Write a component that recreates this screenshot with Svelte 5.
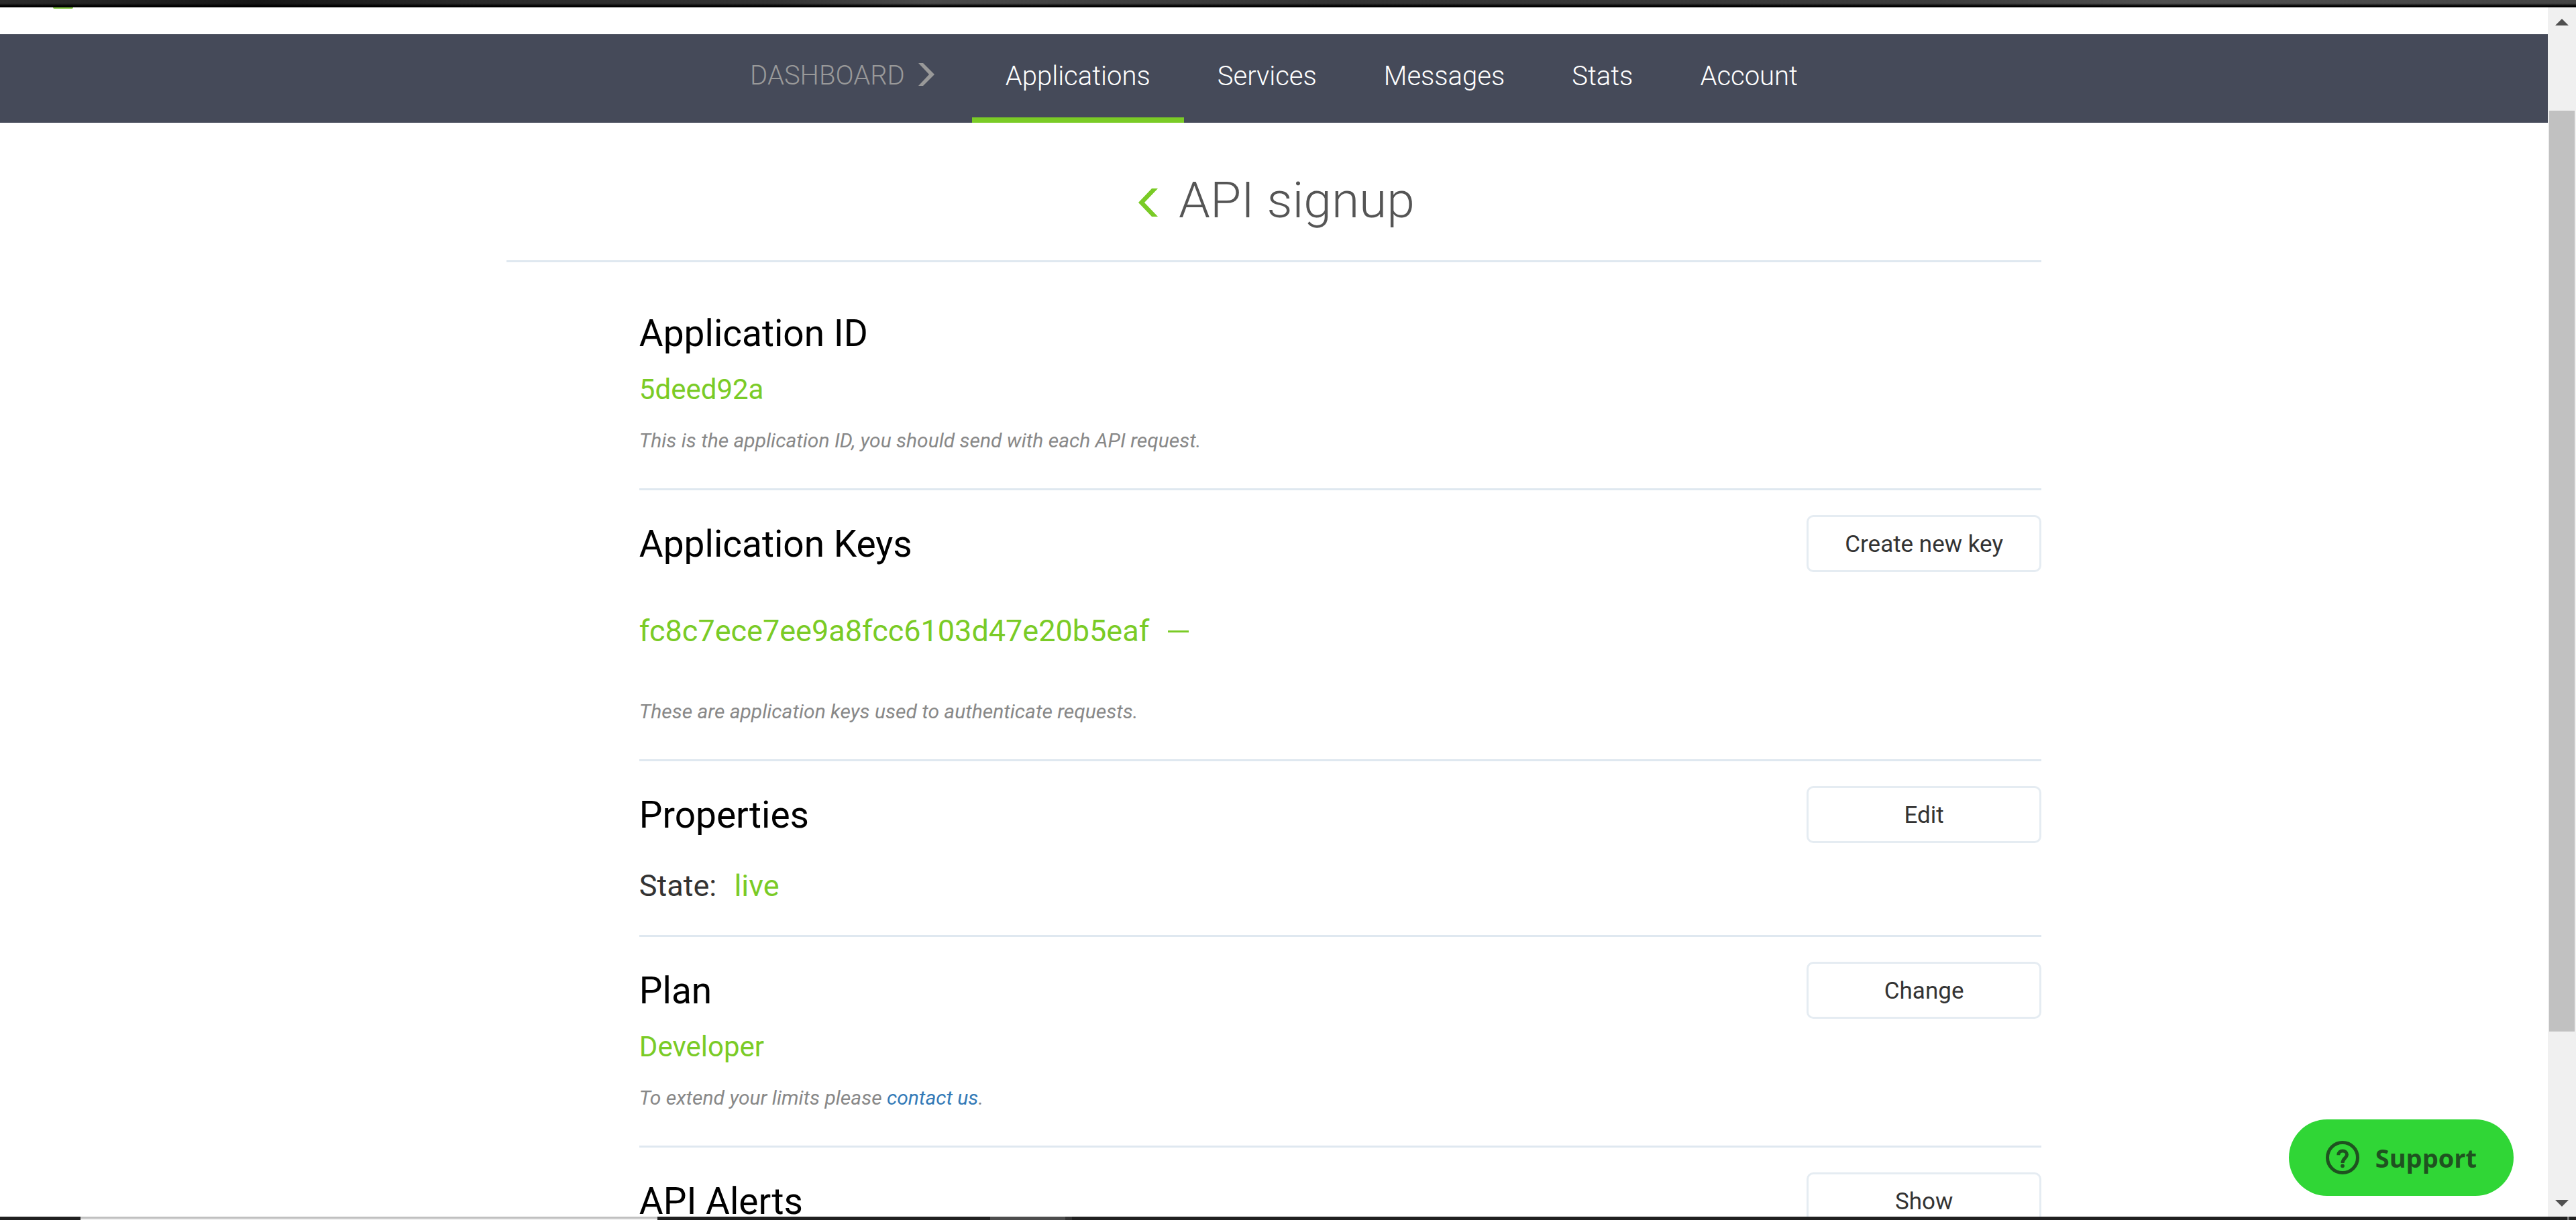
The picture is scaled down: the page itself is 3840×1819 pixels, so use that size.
<script lang="ts">
  const tabs = ['Applications', 'Services', 'Messages', 'Stats', 'Account'];
  let active = $state('Applications');
</script>

<div class="screen">
  <div class="edge-top"></div>
  <div class="viewport">
    <div class="page">
      <div class="brand"><span class="brand-tip"></span></div>
      <nav class="nav" aria-label="Main">
        <a class="crumb" href="#dashboard">
          DASHBOARD
          <svg class="crumb-arrow" viewBox="0 0 24 34" aria-hidden="true">
            <path d="M0 0H7L24 17L7 34H0L16 17Z" fill="#999" />
          </svg>
        </a>
        {#each tabs as tab}
          <a
            class="tab"
            class:active={tab === active}
            href="#{tab.toLowerCase()}"
            onclick={() => (active = tab)}>{tab}</a>
        {/each}
      </nav>

      <main class="main">
        <header class="title">
          <a class="back" href="#applications" aria-label="Back">
            <svg viewBox="0 0 29 42" aria-hidden="true">
              <path d="M20 0H29L9 21L29 42H20L0 21Z" fill="#7acb26" />
            </svg>
          </a>
          <h1>API signup</h1>
        </header>

        <div class="sections">
          <section>
            <div class="head"><h2>Application ID</h2></div>
            <p class="value">5deed92a</p>
            <p class="note">This is the application ID, you should send with each API request.</p>
          </section>

          <section>
            <div class="head">
              <h2>Application Keys</h2>
              <button class="action" type="button">Create new key</button>
            </div>
            <div class="key">
              <span>fc8c7ece7ee9a8fcc6103d47e20b5eaf</span>
              <button class="remove" type="button" aria-label="Delete key"></button>
            </div>
            <p class="note">These are application keys used to authenticate requests.</p>
          </section>

          <section class="short">
            <div class="head">
              <h2>Properties</h2>
              <button class="action" type="button">Edit</button>
            </div>
            <p class="state">State: <span class="live">live</span></p>
          </section>

          <section>
            <div class="head">
              <h2>Plan</h2>
              <button class="action" type="button">Change</button>
            </div>
            <p class="value">Developer</p>
            <p class="note">To extend your limits please <a href="#contact">contact us</a>.</p>
          </section>

          <section>
            <div class="head">
              <h2>API Alerts</h2>
              <button class="action" type="button">Show</button>
            </div>
          </section>
        </div>
      </main>
    </div>

    <div class="scrollbar" aria-hidden="true">
      <svg class="arrow" viewBox="0 0 20 10"><path d="M10 0L20 10H0Z" fill="#505050" /></svg>
      <div class="track">
        <div class="thumb"></div>
      </div>
      <svg class="arrow" viewBox="0 0 20 10"><path d="M0 0H20L10 10Z" fill="#505050" /></svg>
    </div>

    <button class="support" type="button">
      <svg viewBox="0 0 50 50" fill="none" aria-hidden="true">
        <circle cx="25" cy="25" r="22.5" stroke="#1f5220" stroke-width="5" />
        <path
          d="M18.8 21.2C18.8 17.4 21.6 15 25.2 15C28.8 15 31.5 17.4 31.5 20.6C31.5 25.6 25 26 25 33"
          stroke="#1f5220"
          stroke-width="5" />
        <circle cx="25" cy="37.3" r="2.9" fill="#1f5220" />
      </svg>
      Support
    </button>
  </div>
  <div class="edge-bottom">
    <span class="task-light"></span>
    <span class="task-gray"></span>
    <span class="task-dim"></span>
    <span class="task-end"></span>
  </div>
</div>

<style>
  :global(body) {
    overflow: hidden;
    background: #fff;
    font-family: Roboto, 'Liberation Sans', sans-serif;
  }

  .screen {
    display: flex;
    flex-direction: column;
    height: 100vh;
  }

  .edge-top {
    flex: none;
    height: 11px;
    background:
      linear-gradient(#0000 0, #0000 5px, #000 9px),
      linear-gradient(90deg, #2c2c2c, #161616 10%, #2a2a2a 18%, #333 30%, #4a4a4a 36%, #333 52%, #3c3c3c 75%, #505050 84%, #444);
  }

  .viewport {
    position: relative;
    display: flex;
    flex: 1;
    min-height: 0;
  }

  .page {
    flex: 1;
    min-width: 0;
    overflow: hidden;
  }

  .brand {
    height: 40px;
    padding-left: 79px;
  }

  .brand-tip {
    display: block;
    width: 30px;
    height: 2px;
    border-radius: 0 0 15px 15px;
    background: #7fc241;
  }

  .nav {
    display: flex;
    justify-content: center;
    height: 132px;
    background: #454a59;
    font-size: 40px;
    line-height: 126px;
    font-weight: 300;
  }

  .crumb {
    display: flex;
    align-items: center;
    gap: 20px;
    box-sizing: border-box;
    height: 120px;
    padding: 4px 56px 0 50px;
    color: #999;
    line-height: 50px;
    text-decoration: none;
  }

  .crumb-arrow {
    width: 24px;
    height: 34px;
    margin-bottom: 4px;
  }

  .tab {
    box-sizing: border-box;
    height: 132px;
    padding: 0 50px;
    border-bottom: 8px solid transparent;
    color: #fff;
    text-decoration: none;
  }

  .tab.active {
    border-color: #7acb26;
  }

  .main {
    width: 60.25%;
    margin: 0 auto;
  }

  .title {
    display: flex;
    justify-content: center;
    align-items: center;
    gap: 31px;
    height: 205px;
    padding-left: 8px;
    border-bottom: 3px solid #dfe8f0;
  }

  .back svg {
    display: block;
    width: 29px;
    height: 42px;
    margin-top: 33px;
  }

  h1,
  h2,
  p {
    margin: 0;
  }

  h1 {
    padding-top: 25px;
    color: #555;
    font-size: 75px;
    line-height: 90px;
    font-weight: 300;
  }

  .sections {
    margin-left: 198px;
    padding-top: 26px;
  }

  section {
    padding: 37px 0 51px;
    border-bottom: 3px solid #dfe8f0;
  }

  section.short {
    padding-bottom: 43px;
  }

  .head {
    display: flex;
    justify-content: space-between;
    height: 85px;
  }

  h2 {
    color: #000;
    font-size: 55px;
    line-height: 87px;
    font-weight: 400;
  }

  .action {
    width: 350px;
    height: 85px;
    padding: 2px 0 0;
    border: 3px solid #e5ecf2;
    border-radius: 10px;
    background: #fff;
    color: #333;
    font: 400 35px/40px Roboto, 'Liberation Sans', sans-serif;
  }

  .value {
    margin-top: 12px;
    color: #7acb26;
    font-size: 42px;
    line-height: 60px;
  }

  .note {
    margin-top: 26px;
    color: #888;
    font-size: 30px;
    line-height: 40px;
    font-style: italic;
  }

  .note a {
    color: #337ab7;
    text-decoration: none;
  }

  .key {
    display: flex;
    align-items: center;
    gap: 28px;
    margin: 58px 0 70px;
    color: #7acb26;
    font-size: 45px;
    line-height: 60px;
  }

  .remove {
    width: 31px;
    height: 3px;
    padding: 0;
    border: 0;
    background: #7acb26;
  }

  .state {
    margin-top: 34px;
    color: #333;
    font-size: 45px;
    line-height: 60px;
  }

  .live {
    margin-left: 15px;
    color: #7acb26;
  }

  .scrollbar {
    display: flex;
    flex-direction: column;
    align-items: center;
    gap: 12px;
    box-sizing: border-box;
    width: 42px;
    padding: 17px 0 15px;
    background: #f0f0f0;
  }

  .arrow {
    flex: none;
    width: 20px;
    height: 10px;
  }

  .track {
    flex: 1;
    width: 38px;
    padding-top: 115px;
  }

  .thumb {
    height: 85.2%;
    background: #c1c1c1;
  }

  .support {
    position: absolute;
    right: 93px;
    bottom: 31px;
    display: flex;
    align-items: center;
    gap: 24px;
    height: 114px;
    padding: 0 55px;
    border: 0;
    border-radius: 57px;
    background: #30d636;
    color: #1f5220;
    font: 700 38px/50px 'Open Sans', 'Noto Sans', sans-serif;
  }

  .support svg {
    width: 50px;
    height: 50px;
    margin-bottom: 1px;
  }

  .edge-bottom {
    display: flex;
    flex: none;
    height: 5px;
    padding-left: 120px;
    background: #202020;
  }

  .task-light {
    box-sizing: border-box;
    width: 860px;
    border-top: 3px solid #c0c0c0;
    background: #f0f0f0;
  }

  .task-gray {
    width: 112px;
    margin-left: 496px;
    background: #4d4d4d;
  }

  .task-dim {
    width: 10px;
    background: #333;
  }

  .task-end {
    width: 3px;
    margin: 0 10px 0 auto;
    background: #777;
  }
</style>
